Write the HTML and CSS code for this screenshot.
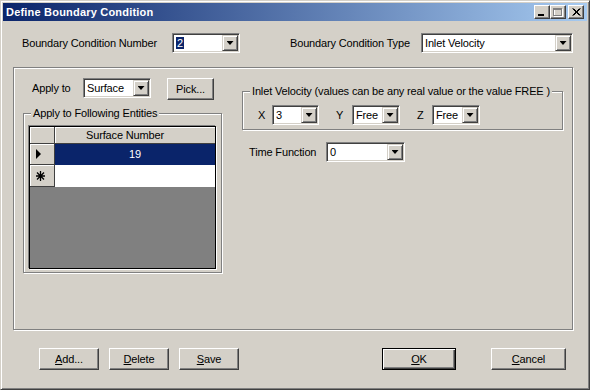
FILE: index.html
```html
<!DOCTYPE html>
<html lang="en">
  <head>
    <meta charset="UTF-8" />
    <title>Define Boundary Condition</title>
    <link rel="stylesheet" href="styles.css">
  </head>
  <body>
    <div class="window">
      <div class="titlebar">
        <span class="title">Define Boundary Condition</span>
        <div class="cap-btns">
          <span class="cap-btn">
            <svg width="14" height="12" viewBox="0 0 14 12"><rect x="3" y="8" width="6" height="2" fill="#000"/></svg>
          </span>
          <span class="cap-btn">
            <svg width="14" height="12" viewBox="0 0 14 12">
              <rect x="3.5" y="3.5" width="8" height="7" fill="none" stroke="#fff"/>
              <rect x="2.5" y="2.5" width="8" height="7" fill="none" stroke="#808080"/>
              <rect x="2" y="2" width="9" height="2" fill="#808080"/>
            </svg>
          </span>
          <span class="cap-btn close">
            <svg width="14" height="12" viewBox="0 0 14 12">
              <path d="M3.5 2.5 L10.5 9.5 M10.5 2.5 L3.5 9.5 M4.5 2.5 L11.5 9.5 M11.5 2.5 L4.5 9.5" stroke="#000" stroke-width="1" fill="none"/>
            </svg>
          </span>
        </div>
      </div>

      <div class="top-row">
        <label class="lbl lbl-num">Boundary Condition Number</label>
        <div class="combo combo-num">
          <span class="combo-text"><span class="sel">2</span></span>
          <span class="drop"></span>
        </div>
        <label class="lbl lbl-type">Boundary Condition Type</label>
        <div class="combo combo-type">
          <span class="combo-text">Inlet Velocity</span>
          <span class="drop"></span>
        </div>
      </div>

      <div class="main-group">
        <div class="left-col">
          <div class="apply-row">
            <label class="lbl lbl-apply">Apply to</label>
            <div class="combo combo-surface">
              <span class="combo-text">Surface</span>
              <span class="drop"></span>
            </div>
            <button class="btn btn-pick">Pick...</button>
          </div>

          <div class="group entities">
            <div class="group-label">Apply to Following Entities</div>
            <div class="grid">
              <div class="sel-cell"></div>
              <div class="head-cell">Surface Number</div>
              <div class="sel-cell">
                <svg width="24" height="20" viewBox="0 0 24 20"><polygon points="6,5 11,10 6,15" fill="#000"/></svg>
              </div>
              <div class="data-cell current">19</div>
              <div class="sel-cell">
                <svg width="24" height="21" viewBox="0 0 24 21">
                  <path d="M10.5 6 V16 M6 11 H15 M7 7.5 L14 14.5 M14 7.5 L7 14.5" stroke="#000" stroke-width="1.3" fill="none"/>
                </svg>
              </div>
              <div class="data-cell"></div>
            </div>
          </div>
        </div>

        <div class="right-col">
          <div class="group inlet">
            <div class="group-label">Inlet Velocity (values can be any real value or the value FREE )</div>
            <div class="xyz-row">
              <span class="axis axis-x">X</span>
              <div class="combo combo-x">
                <span class="combo-text">3</span>
                <span class="drop"></span>
              </div>
              <span class="axis axis-y">Y</span>
              <div class="combo combo-y">
                <span class="combo-text">Free</span>
                <span class="drop"></span>
              </div>
              <span class="axis axis-z">Z</span>
              <div class="combo combo-z">
                <span class="combo-text">Free</span>
                <span class="drop"></span>
              </div>
            </div>
          </div>

          <div class="time-row">
            <label class="lbl lbl-time">Time Function</label>
            <div class="combo combo-time">
              <span class="combo-text">0</span>
              <span class="drop"></span>
            </div>
          </div>
        </div>
      </div>

      <div class="button-row">
        <button class="btn btn-small"><u>A</u>dd...</button>
        <button class="btn btn-small"><u>D</u>elete</button>
        <button class="btn btn-small"><u>S</u>ave</button>
        <button class="btn btn-ok default"><u>O</u>K</button>
        <button class="btn btn-cancel"><u>C</u>ancel</button>
      </div>
    </div>
  </body>
</html>
```

FILE: styles.css
```css
body {
  margin: 0;
  background: #d4d0c8;
  font-family: "Liberation Sans", Arial, sans-serif;
  font-size: 11px;
  letter-spacing: -0.15px;
  color: #000;
}

/* window frame */
.window {
  width: 590px;
  height: 390px;
  box-sizing: border-box;
  border: 1px solid;
  border-color: #d4d0c8 #404040 #404040 #d4d0c8;
  box-shadow: inset 1px 1px #fff, inset -1px -1px #808080;
  padding: 2px;
  background: #d4d0c8;
}
.titlebar {
  height: 18px;
  display: flex;
  align-items: center;
  padding: 0 3px 0 3px;
  background: linear-gradient(to right, #0a246a, #a6caf0);
  color: #fff;
  font-weight: bold;
  letter-spacing: 0.2px;
}
.title {
  flex: 1;
}
.cap-btns {
  display: flex;
}
.cap-btn {
  display: block;
  width: 16px;
  height: 14px;
  box-sizing: border-box;
  background: #d4d0c8;
  border: 1px solid;
  border-color: #fff #404040 #404040 #fff;
  box-shadow: inset -1px -1px #808080;
}
.cap-btn svg {
  display: block;
}
.cap-btn.close {
  margin-left: 2px;
}

/* labels and combos */
.lbl {
  white-space: nowrap;
}
.combo {
  box-sizing: border-box;
  height: 20px;
  display: flex;
  align-items: center;
  background: #fff;
  border: 1px solid;
  border-color: #808080 #fff #fff #808080;
  box-shadow: inset 1px 1px #404040, inset -1px -1px #d4d0c8;
  padding: 1px;
}
.combo-text {
  flex: 1;
  padding-left: 2px;
  white-space: nowrap;
  overflow: hidden;
}
.sel {
  background: #0a246a;
  color: #fff;
  padding: 0 1px;
}
.drop {
  width: 16px;
  height: 16px;
  box-sizing: border-box;
  background: #d4d0c8;
  border: 1px solid;
  border-color: #d4d0c8 #404040 #404040 #d4d0c8;
  box-shadow: inset 1px 1px #fff, inset -1px -1px #808080;
  display: flex;
  align-items: center;
  justify-content: center;
}
.drop::after {
  content: "";
  width: 7px;
  height: 4px;
  background: #000;
  clip-path: polygon(0 0, 100% 0, 50% 100%);
}

/* top row */
.top-row {
  display: flex;
  align-items: center;
  margin-top: 12px;
  padding-left: 19px;
}
.lbl-num {
  width: 150px;
}
.combo-num {
  width: 68px;
}
.lbl-type {
  margin-left: 50px;
  width: 131px;
}
.combo-type {
  width: 152px;
}

/* etched group boxes */
.main-group,
.group {
  box-sizing: border-box;
  border: 1px solid #808080;
  box-shadow: 1px 1px 0 #fff, inset 1px 1px 0 #fff;
}
.main-group {
  margin: 14px 0 0 10px;
  width: 560px;
  height: 263px;
  display: flex;
}
.group {
  display: flex;
  flex-direction: column;
}
.group-label {
  align-self: flex-start;
  line-height: 13px;
  margin: -7px 0 0 7px;
  padding: 0 2px;
  background: #d4d0c8;
  white-space: nowrap;
}

.left-col {
  width: 200px;
  margin-left: 9px;
}
.apply-row {
  display: flex;
  align-items: flex-start;
  margin-top: 10px;
  padding-left: 9px;
}
.lbl-apply {
  width: 51px;
  line-height: 20px;
}
.combo-surface {
  width: 68px;
}
.btn-pick {
  margin-left: 16px;
  width: 47px;
  height: 21px;
}

.entities {
  margin-top: 13px;
  width: 199px;
  height: 160px;
}

/* data grid */
.grid {
  margin: 6px 0 0 5px;
  width: 187px;
  height: 143px;
  box-sizing: border-box;
  border: 1px solid #000;
  box-shadow: -1px -1px 0 #808080, 1px 1px 0 #fff;
  background: #808080;
  display: grid;
  grid-template-columns: 25px 160px;
  grid-template-rows: 17px 21px 22px;
  align-content: start;
}
.sel-cell,
.head-cell {
  background: #d4d0c8;
  box-sizing: border-box;
  border-right: 1px solid #404040;
  border-bottom: 1px solid #404040;
  box-shadow: inset 1px 1px #fff;
}
.sel-cell svg {
  display: block;
}
.head-cell {
  border-right: none;
  padding-left: 31px;
  line-height: 16px;
  white-space: nowrap;
}
.data-cell {
  background: #fff;
  text-align: center;
  line-height: 21px;
}
.data-cell.current {
  background: #0a246a;
  color: #fff;
}

.right-col {
  margin-left: 19px;
}
.inlet {
  margin-top: 23px;
  width: 321px;
  height: 39px;
}
.xyz-row {
  display: flex;
  align-items: center;
  margin-top: 7px;
  padding-left: 15px;
}
.axis-x {
  width: 14px;
}
.axis-y {
  margin-left: 17px;
  width: 16px;
}
.axis-z {
  margin-left: 17px;
  width: 15px;
}
.combo-x {
  width: 47px;
}
.combo-y,
.combo-z {
  width: 48px;
}

.time-row {
  display: flex;
  align-items: center;
  margin-top: 12px;
  padding-left: 7px;
}
.lbl-time {
  width: 77px;
}
.combo-time {
  width: 79px;
}

/* push buttons */
.btn {
  box-sizing: border-box;
  height: 22px;
  padding: 0;
  background: #d4d0c8;
  border: 1px solid;
  border-color: #fff #404040 #404040 #fff;
  box-shadow: inset -1px -1px #808080;
  font: inherit;
  letter-spacing: inherit;
  color: #000;
}
.btn.default {
  border-color: #000;
  box-shadow: inset 1px 1px #fff, inset -1px -1px #404040, inset -2px -2px #808080;
}
.button-row {
  display: flex;
  margin-top: 18px;
  padding-left: 36px;
}
.btn-small {
  width: 60px;
  margin-right: 10px;
}
.btn-ok {
  width: 74px;
  margin-left: 133px;
}
.btn-cancel {
  width: 75px;
  margin-left: 35px;
}
```
